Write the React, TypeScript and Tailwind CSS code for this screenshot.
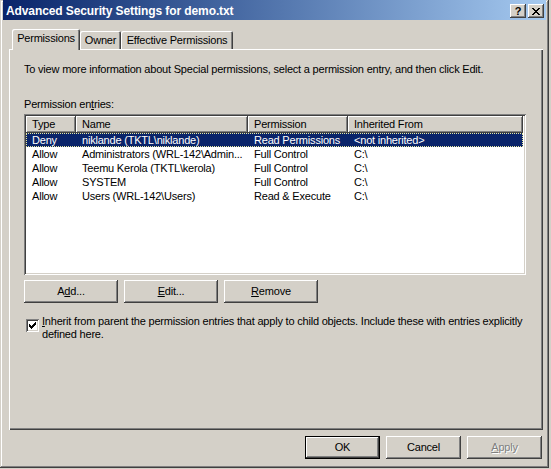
import React from "react";

// classic Win2000 3D edges
const raised =
  "shadow-[inset_-1px_-1px_#404040,inset_1px_1px_#fff,inset_-2px_-2px_#808080,inset_2px_2px_#d4d0c8]";
const sunken =
  "shadow-[inset_1px_1px_#808080,inset_-1px_-1px_#fff,inset_2px_2px_#404040,inset_-2px_-2px_#d4d0c8]";

const COLUMNS = [
  { label: "Type", w: "w-[50px]" },
  { label: "Name", w: "w-[172px]" },
  { label: "Permission", w: "w-[100px]" },
  { label: "Inherited From", w: "w-[175px]" },
];

const ROWS = [
  ["Deny", "niklande (TKTL\\niklande)", "Read Permissions", "<not inherited>"],
  ["Allow", "Administrators (WRL-142\\Admin...", "Full Control", "C:\\"],
  ["Allow", "Teemu Kerola (TKTL\\kerola)", "Full Control", "C:\\"],
  ["Allow", "SYSTEM", "Full Control", "C:\\"],
  ["Allow", "Users (WRL-142\\Users)", "Read & Execute", "C:\\"],
];

function Button({
  children,
  w = "w-[94px]",
  isDefault = false,
  disabled = false,
}: {
  children: React.ReactNode;
  w?: string;
  isDefault?: boolean;
  disabled?: boolean;
}) {
  const edge = isDefault
    ? "shadow-[inset_0_0_0_1px_#000,inset_-2px_-2px_#404040,inset_2px_2px_#fff,inset_-3px_-3px_#808080]"
    : raised;
  return (
    <div
      className={`${w} h-[23px] bg-[#d4d0c8] ${edge} flex items-center justify-center leading-[13px] ${
        disabled ? "text-[#808080] [text-shadow:1px_1px_0_#fff]" : "text-black"
      }`}
    >
      <span>{children}</span>
    </div>
  );
}

function TitleButton({ children }: { children: React.ReactNode }) {
  return (
    <div className={`w-[16px] h-[14px] bg-[#d4d0c8] ${raised} flex items-center justify-center`}>
      {children}
    </div>
  );
}

export default function App() {
  return (
    <div className="w-[551px] h-[469px] bg-[#d4d0c8] font-['Liberation_Sans',Arial,sans-serif] text-[11px] tracking-[-0.2px] text-black select-none">
      <div className="w-[549px] h-[468px] shadow-[inset_-1px_-1px_#404040,inset_1px_1px_#d4d0c8,inset_-2px_-2px_#808080,inset_2px_2px_#fff]">
        {/* title bar */}
        <div className="mx-[3px] h-[20px] bg-gradient-to-r from-[#0a246a] to-[#a6caf0] flex items-center pl-[3px] pr-[2px]">
          <span className="text-white font-bold text-[12px] tracking-[-0.1px] leading-[13px] pt-[2px]">
            Advanced Security Settings for demo.txt
          </span>
          <div className="ml-auto flex gap-[2px] pt-[2px]">
            <TitleButton>
              <span className="font-bold text-[11px] leading-[11px] tracking-normal pt-px">?</span>
            </TitleButton>
            <TitleButton>
              <svg width="8" height="7" viewBox="0 0 8 7" shapeRendering="crispEdges">
                <path
                  d="M0 0h2v1h1v1h2V1h1V0h2v1H7v1H6v1H5v1h1v1h1v1h1v1H6V6H5V5H3v1H2v1H0V6h1V5h1V4h1V3H2V2H1V1H0z"
                  fill="#000"
                />
              </svg>
            </TitleButton>
          </div>
        </div>

        <div className="pl-[9px]">
          {/* tabs */}
          <div className="flex items-end pl-[3px] pt-[9px]">
            <div className="relative z-10 -mb-px w-[68px] h-[21px] bg-[#d4d0c8] rounded-t-[2px] shadow-[inset_1px_1px_#fff,inset_-1px_0_#404040,inset_-2px_0_#808080] text-center pt-[3px] leading-[13px]">
              Permissions
            </div>
            <div className="w-[41px] h-[18px] rounded-t-[2px] shadow-[inset_1px_1px_#fff,inset_-1px_0_#404040,inset_-2px_0_#808080] text-center pt-[3px] leading-[13px]">
              Owner
            </div>
            <div className="w-[112px] h-[18px] rounded-t-[2px] shadow-[inset_1px_1px_#fff,inset_-1px_0_#404040,inset_-2px_0_#808080] text-center pt-[3px] leading-[13px]">
              Effective Permissions
            </div>
          </div>

          {/* tab panel */}
          <div className="w-[534px] h-[381px] shadow-[inset_1px_1px_#fff,inset_-1px_-1px_#404040,inset_-2px_-2px_#808080] pt-[14px] pl-[15px] flex flex-col items-start leading-[13px]">
            <p className="whitespace-nowrap">
              To view more information about Special permissions, select a permission entry, and then click Edit.
            </p>
            <p className="mt-[22px] whitespace-nowrap">
              Permission en<span className="underline">t</span>ries:
            </p>

            {/* list view */}
            <div className={`mt-[3px] w-[502px] h-[161px] bg-white ${sunken} p-[2px]`}>
              <div className="flex h-[17px]">
                {COLUMNS.map((c) => (
                  <div
                    key={c.label}
                    className={`${c.w} bg-[#d4d0c8] ${raised} pl-[6px] leading-[17px] whitespace-nowrap overflow-hidden`}
                  >
                    {c.label}
                  </div>
                ))}
              </div>
              {ROWS.map((r, i) => (
                <div
                  key={i}
                  className={`flex h-[14px] w-[497px] leading-[14px] ${
                    i === 0
                      ? "bg-[#0a246a] text-white outline-1 outline-dotted outline-[#e8e8a0] -outline-offset-1"
                      : ""
                  }`}
                >
                  {r.map((cell, j) => (
                    <div key={j} className={`${COLUMNS[j].w} pl-[6px] whitespace-nowrap overflow-hidden`}>
                      {cell}
                    </div>
                  ))}
                </div>
              ))}
            </div>

            {/* add / edit / remove */}
            <div className="mt-[5px] flex gap-[6px]">
              <Button>
                A<span className="underline">d</span>d...
              </Button>
              <Button>
                <span className="underline">E</span>dit...
              </Button>
              <Button>
                <span className="underline">R</span>emove
              </Button>
            </div>

            {/* inherit checkbox */}
            <div className="mt-[12px] flex items-start">
              <div className={`ml-[2px] mt-[4px] w-[13px] h-[13px] bg-white ${sunken} flex items-center justify-center shrink-0`}>
                <svg width="7" height="7" viewBox="0 0 7 7" shapeRendering="crispEdges">
                  <path d="M6 0h1v3H6v1H5v1H4v1H3v1H2V6H1V5H0V2h1v1h1v1h1V3h1V2h1V1h1z" fill="#000" />
                </svg>
              </div>
              <p className="ml-[3px] whitespace-nowrap leading-[13px]">
                <span className="underline">I</span>nherit from parent the permission entries that apply to child objects. Include these with entries explicitly
                <br />
                defined here.
              </p>
            </div>
          </div>

          {/* dialog buttons */}
          <div className="w-[534px] mt-[6px] flex justify-end gap-[6px] pr-[1px]">
            <Button w="w-[75px]" isDefault>
              OK
            </Button>
            <Button w="w-[75px]">Cancel</Button>
            <Button w="w-[75px]" disabled>
              <span className="underline">A</span>pply
            </Button>
          </div>
        </div>
      </div>
    </div>
  );
}
